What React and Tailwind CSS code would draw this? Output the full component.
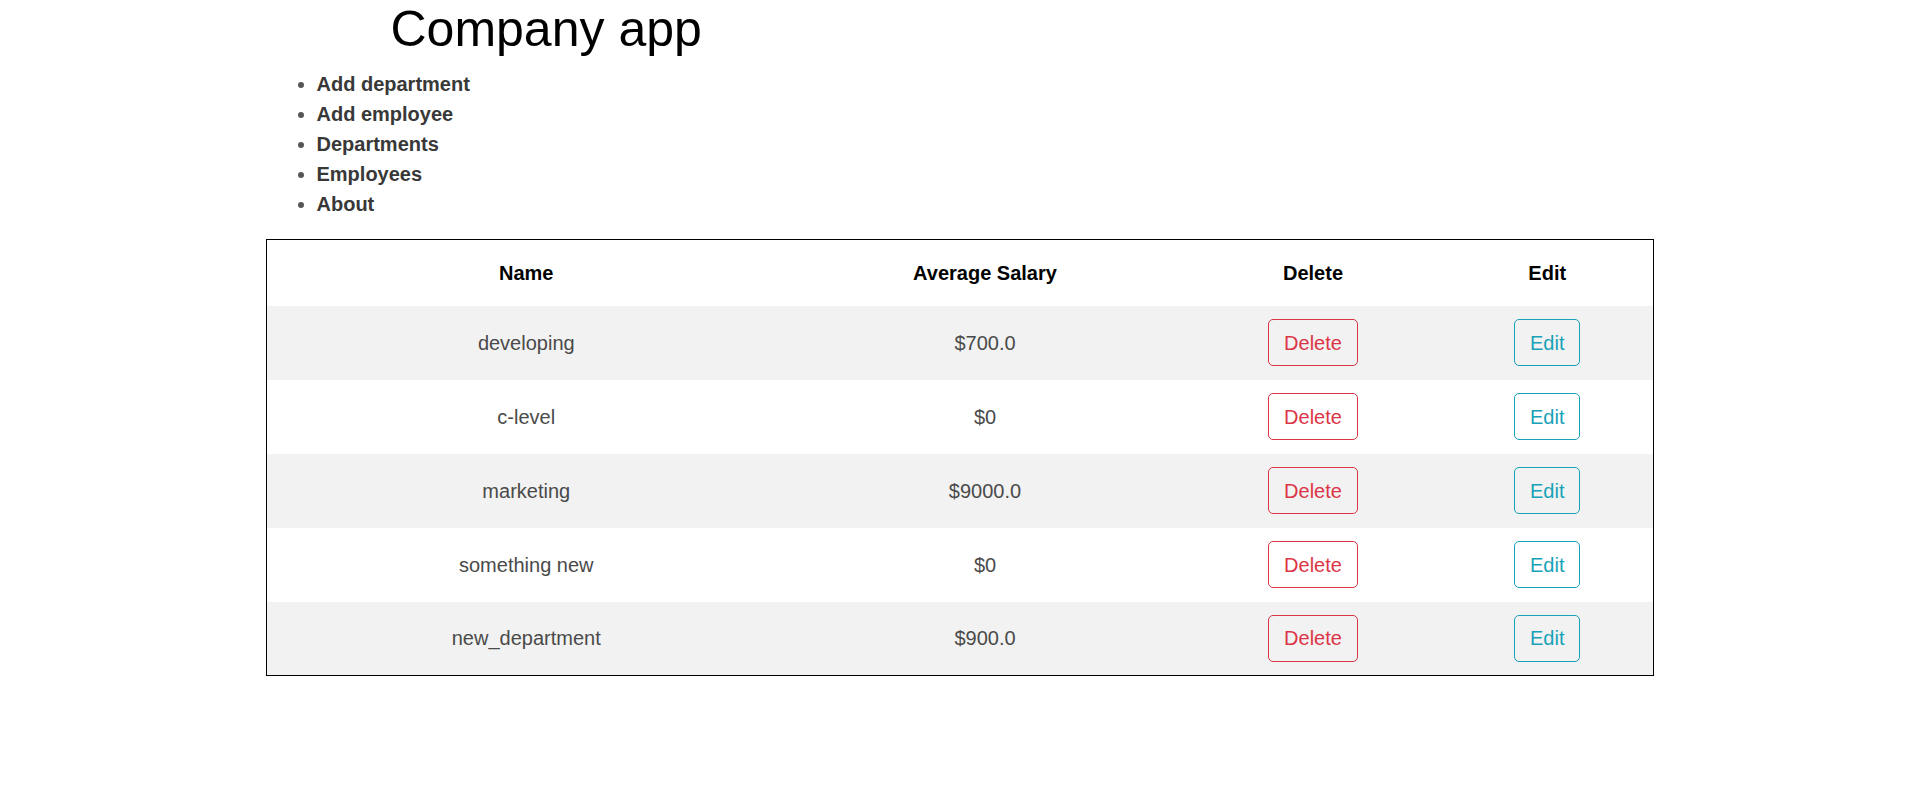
import React from "react";

const departments = [
  { id: 1, name: "developing", salary: "$700.0" },
  { id: 2, name: "c-level", salary: "$0" },
  { id: 3, name: "marketing", salary: "$9000.0" },
  { id: 4, name: "something new", salary: "$0" },
  { id: 5, name: "new_department", salary: "$900.0" },
];

const links = ["Add department", "Add employee", "Departments", "Employees", "About"];

const App = () => {
  return (
    <div className="min-h-[792px] bg-white font-['Liberation_Sans',Arial,sans-serif] text-[20px] leading-[1.5] text-[#212529]">
      <div className="mx-auto w-[1388px]">
        <h1 className="pl-[125px] text-[50px] leading-[1.2] font-normal text-black mb-[10px] -mt-px">
          Company app
        </h1>

        <ul className="ml-[11px] pl-[40px] list-disc mb-[20px] marker:text-[#555]">
          {links.map((link) => (
            <li key={link}>
              <a href="#" className="font-bold text-[#383838]">
                {link}
              </a>
            </li>
          ))}
        </ul>

        <table className="w-full table-fixed border border-black border-collapse">
          <colgroup>
            <col className="w-[520px]" />
            <col className="w-[398px]" />
            <col className="w-[258px]" />
            <col />
          </colgroup>
          <thead>
            <tr className="h-[66px]">
              <th className="font-bold text-black text-center">Name</th>
              <th className="font-bold text-black text-center">Average Salary</th>
              <th className="font-bold text-black text-center">Delete</th>
              <th className="font-bold text-black text-center">Edit</th>
            </tr>
          </thead>
          <tbody>
            {departments.map((dep, idx) => (
              <tr
                key={dep.id}
                className={`h-[74px] ${idx % 2 === 0 ? "bg-[#f2f2f2]" : "bg-white"}`}
              >
                <td className="text-center text-[#4a4a4a]">{dep.name}</td>
                <td className="text-center text-[#4a4a4a]">{dep.salary}</td>
                <td className="text-center">
                  <button className="border border-[#dc3545] text-[#dc3545] rounded-[5px] px-[15px] py-[7.5px] leading-[30px]">
                    Delete
                  </button>
                </td>
                <td className="text-center">
                  <button className="border border-[#17a2b8] text-[#17a2b8] rounded-[5px] px-[15px] py-[7.5px] leading-[30px]">
                    Edit
                  </button>
                </td>
              </tr>
            ))}
          </tbody>
        </table>
      </div>
    </div>
  );
};

export default App;
